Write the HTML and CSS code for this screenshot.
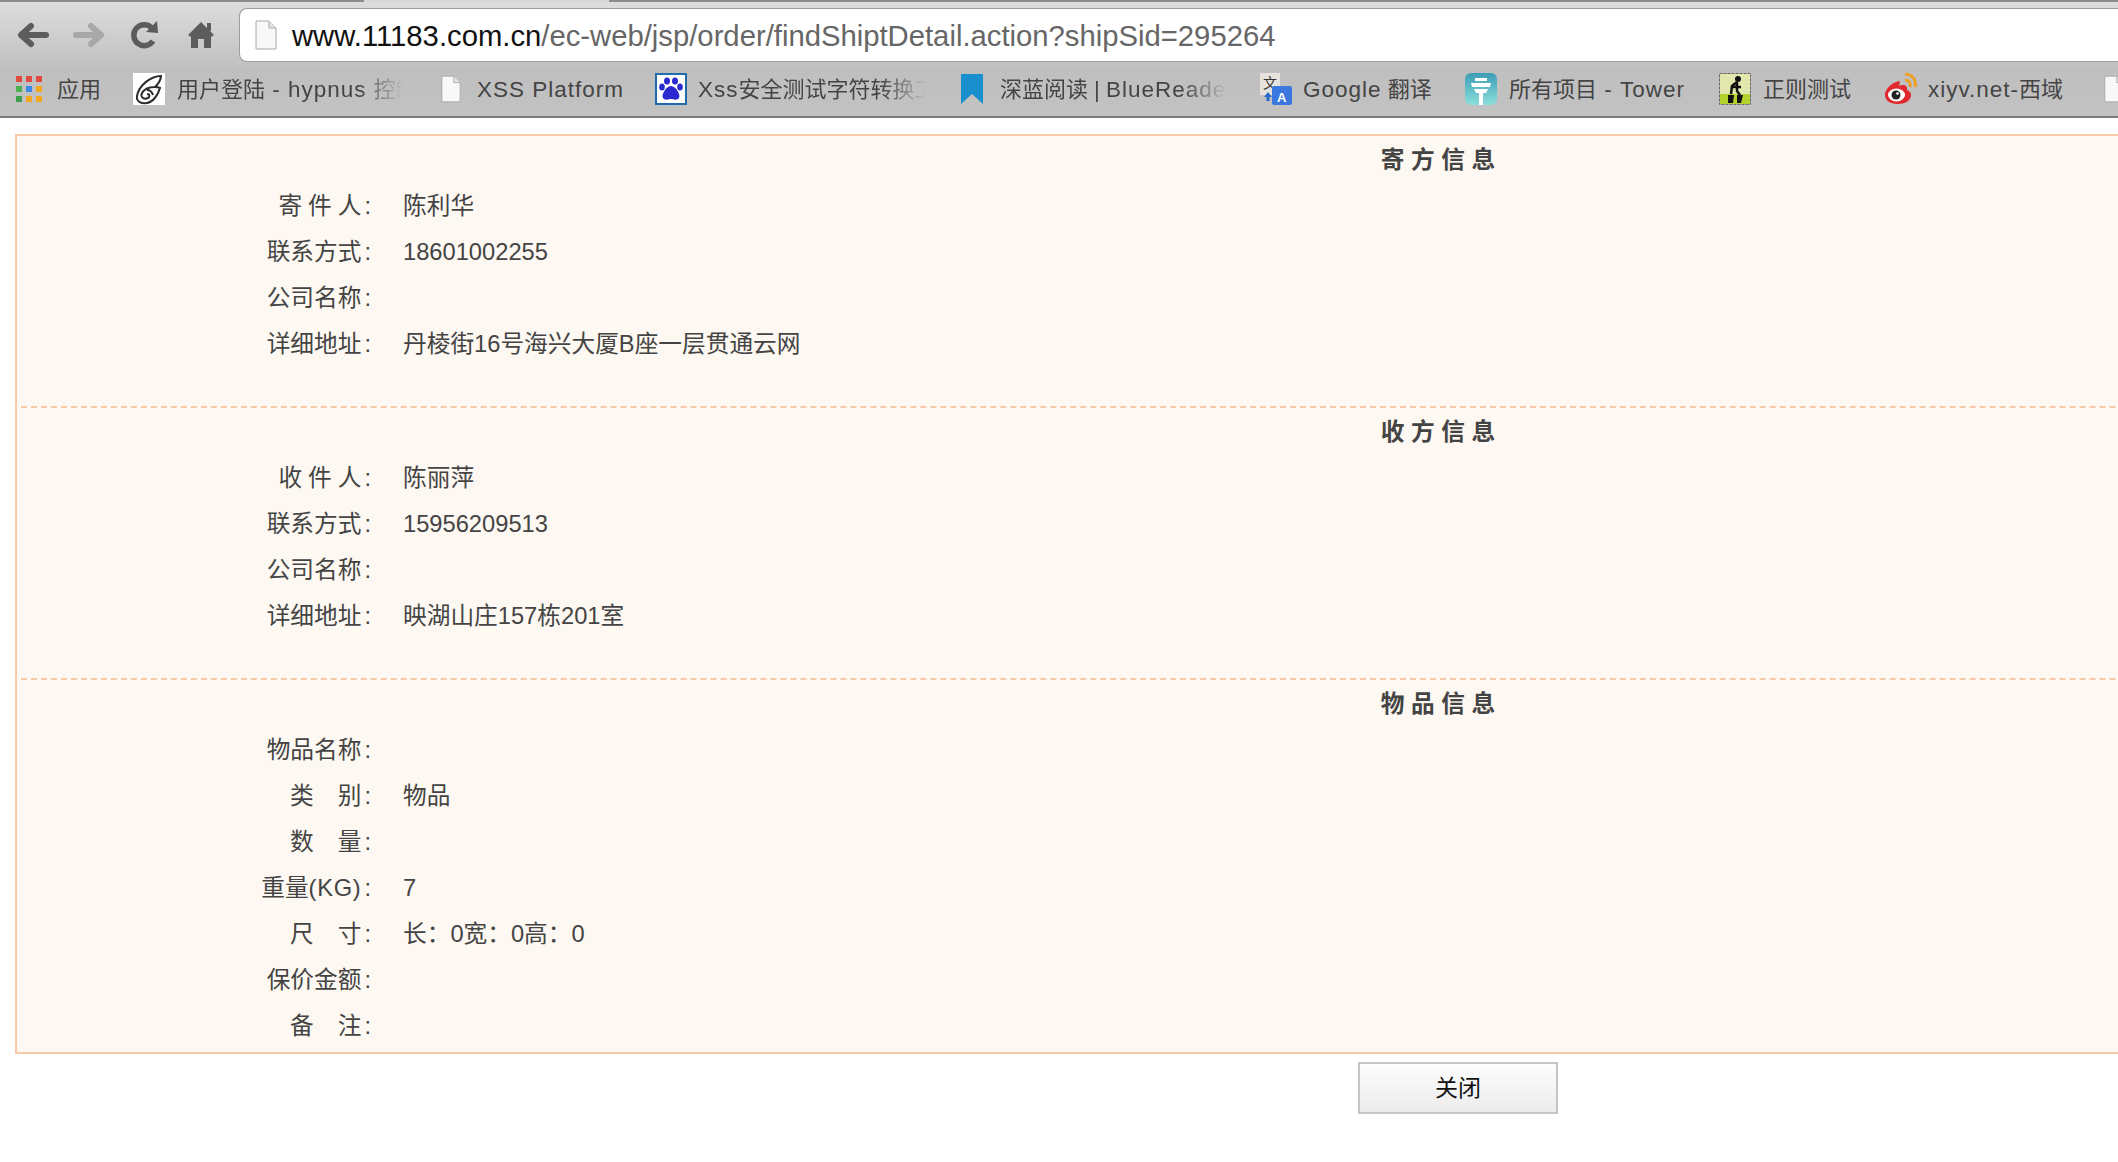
FILE: index.html
```html
<!DOCTYPE html>
<html lang="zh-CN">
<head>
    <meta charset="UTF-8">
    <title>寄件详情</title>
    <link rel="stylesheet" href="styles.css">
</head>
<body>
    <div class="browser-top">
        <div class="tab-strip"><span class="tab-gap"></span></div>
        <div class="toolbar">
            <div class="nav-icons">
                <svg class="nav-icon" viewBox="0 0 32 32"><path d="M14 7 L4 16 L14 25 M6 16 H29" fill="none" stroke="#5c5c5c" stroke-width="6" stroke-linecap="round" stroke-linejoin="round"/></svg>
                <svg class="nav-icon" viewBox="0 0 32 32"><path d="M18 7 L28 16 L18 25 M26 16 H3" fill="none" stroke="#a8a8a8" stroke-width="6" stroke-linecap="round" stroke-linejoin="round"/></svg>
                <svg class="nav-icon" viewBox="0 0 32 32"><path d="M24 22 A10.500 10.500 0 1 1 23 9" fill="none" stroke="#5c5c5c" stroke-width="5.500"/><path d="M17 13 L29 14 L28 2 Z" fill="#5c5c5c"/></svg>
                <svg class="nav-icon" viewBox="0 0 32 32"><path d="M16 3 L29 16 L26 18 V29 H19 V20 H13 V29 H6 V18 L3 16 Z" fill="#5c5c5c"/><rect x="22" y="4" width="4" height="8" fill="#5c5c5c"/></svg>
            </div>
            <div class="address-bar">
                <svg class="doc-icon" viewBox="0 0 24 30"><path d="M2 1 H15 L22 8 V29 H2 Z" fill="#f8f8f8" stroke="#a8a8a8"/><path d="M15 1 V8 H22" fill="#e6e6e6" stroke="#a8a8a8"/></svg>
                <span class="url"><b class="url-host">www.11183.com.cn</b>/ec-web/jsp/order/findShiptDetail.action?shipSid=295264</span>
            </div>
        </div>
        <div class="bookmarks">
            <div class="bookmark bm-apps">
                <svg class="apps-icon" viewBox="0 0 26 26">
                    <rect x="0" y="0" width="6" height="6" fill="#e04a3f"/><rect x="10" y="0" width="6" height="6" fill="#e04a3f"/><rect x="20" y="0" width="6" height="6" fill="#e04a3f"/>
                    <rect x="0" y="10" width="6" height="6" fill="#4caf50"/><rect x="10" y="10" width="6" height="6" fill="#3b88e8"/><rect x="20" y="10" width="6" height="6" fill="#f2a81d"/>
                    <rect x="0" y="20" width="6" height="6" fill="#3f9e4d"/><rect x="10" y="20" width="6" height="6" fill="#f2a81d"/><rect x="20" y="20" width="6" height="6" fill="#f2a81d"/>
                </svg>
                <span class="bm-text">应用</span>
            </div>
            <div class="bookmark bm-hypnus">
                <svg class="fav" viewBox="0 0 32 32"><rect width="32" height="32" fill="#fff"/><path d="M28 3 C18 3 6 12 4 23 C3 29 9 31 14 30 C20 29 25 22 27 15 C25 14 23 14 22 14 C26 10 28 6 28 3 Z M22 14 C17 14 12 15 9 20 C7 24 11 27 15 25 C17 24 17 21 14 21 M20 22 C19 19 17 17 14 17" fill="none" stroke="#2b2b2b" stroke-width="2"/></svg>
                <span class="bm-text fade">用户登陆<span class="lat"> - hypnus </span>控制台</span>
            </div>
            <div class="bookmark bm-xss">
                <svg class="fav-doc" viewBox="0 0 24 30"><path d="M2 1 H15 L22 8 V29 H2 Z" fill="#f8f8f8" stroke="#a8a8a8"/><path d="M15 1 V8 H22" fill="#e6e6e6" stroke="#a8a8a8"/></svg>
                <span class="bm-text lat">XSS Platform</span>
            </div>
            <div class="bookmark bm-paw">
                <svg class="fav" viewBox="0 0 32 32"><rect x="1" y="1" width="30" height="30" fill="#fff" stroke="#1f6aa8" stroke-width="2"/><ellipse cx="12" cy="8" rx="3" ry="3.500" fill="#2a2ad0"/><ellipse cx="20" cy="8" rx="3" ry="3.500" fill="#2a2ad0"/><ellipse cx="7" cy="14" rx="2.800" ry="3.500" fill="#2a2ad0"/><ellipse cx="25" cy="14" rx="2.800" ry="3.500" fill="#2a2ad0"/><path d="M16 13 C11 13 6 22 8 25 C10 28 14 26 16 26 C18 26 22 28 24 25 C26 22 21 13 16 13 Z" fill="#2a2ad0"/></svg>
                <span class="bm-text fade fade-paw"><span class="lat">Xss</span>安全测试字符转换工具</span>
            </div>
            <div class="bookmark bm-blue">
                <svg class="fav-mark" viewBox="0 0 22 30"><path d="M0 0 H22 V30 L11 20 L0 30 Z" fill="#1a8fce"/></svg>
                <span class="bm-text fade fade-blue">深蓝阅读 | <span class="lat">BlueReader</span></span>
            </div>
            <div class="bookmark bm-google">
                <svg class="fav" viewBox="0 0 32 32"><rect x="0" y="0" width="20" height="22" fill="#e5e3dc"/><text class="zh-glyph" x="3" y="15">文</text><rect x="12" y="13" width="20" height="19" rx="2" fill="#3a78e0"/><text class="latin-glyph" x="17" y="29">A</text><path d="M8 19 L12 24 H9.500 V28 H6.500 V24 H4 Z" fill="#2a69c8"/></svg>
                <span class="bm-text"><span class="lat">Google</span> 翻译</span>
            </div>
            <div class="bookmark bm-tower">
                <svg class="fav" viewBox="0 0 32 32"><defs><linearGradient id="towerBg" x1="0" y1="0" x2="0" y2="1"><stop offset="0" stop-color="#3d9db5"/><stop offset="1" stop-color="#8ce0dc"/></linearGradient></defs><rect width="32" height="32" rx="6" fill="url(#towerBg)"/><path d="M10 5 H22 V8 H10 Z M6 10 H26 L25 14 H7 Z M9 16 H23 L21 20 H11 Z M14 20 H18 V32 H14 Z" fill="#fff"/></svg>
                <span class="bm-text">所有项目<span class="lat"> - Tower</span></span>
            </div>
            <div class="bookmark bm-regex">
                <svg class="fav" viewBox="0 0 32 32"><rect x="0.500" y="0.500" width="31" height="31" fill="#e2e8ad" stroke="#666" stroke-dasharray="3 1"/><rect x="1" y="21" width="30" height="10" fill="#b4d22c"/><circle cx="19" cy="6" r="3" fill="#111"/><path d="M18 9 L13 13 L12 21 M18 9 L18 18 L21 22 M14 14 H22" fill="none" stroke="#111" stroke-width="2.500"/><path d="M9 22 H15 L14 30 H9 Z M18 22 H24 L22 30 H18 Z" fill="#111"/></svg>
                <span class="bm-text">正则测试</span>
            </div>
            <div class="bookmark bm-weibo">
                <svg class="fav-weibo" viewBox="0 0 34 32"><path d="M21 1 C28 1 33 7 31 14 M21 7 C25 7 27 10 26 14" fill="none" stroke="#f0a020" stroke-width="2.800"/><path d="M15 8 C7 10 0 17 1 23 C2 29 8 31 14 31 C22 31 27 27 27 22 C27 19 25 18 23 17 C24 12 19 11 15 13 C16 10 16 8 15 8 Z" fill="#e0282e"/><ellipse cx="12.500" cy="22" rx="8.500" ry="6.500" fill="#fff"/><circle cx="12" cy="22" r="4.500" fill="#222"/><circle cx="13.500" cy="20.500" r="1.300" fill="#fff"/></svg>
                <span class="bm-text"><span class="lat">xiyv.net-</span>西域</span>
            </div>
            <div class="bookmark bm-last">
                <svg class="fav-doc" viewBox="0 0 24 30"><path d="M2 1 H15 L22 8 V29 H2 Z" fill="#f8f8f8" stroke="#a8a8a8"/><path d="M15 1 V8 H22" fill="#e6e6e6" stroke="#a8a8a8"/></svg>
            </div>
        </div>
    </div>

    <div class="page">
        <div class="detail-box">
            <div class="section">
                <div class="section-title">寄 方 信 息</div>
                <div class="row"><span class="label">寄 件 人<i class="colon">:</i></span><span class="value">陈利华</span></div>
                <div class="row"><span class="label">联系方式<i class="colon">:</i></span><span class="value">18601002255</span></div>
                <div class="row"><span class="label">公司名称<i class="colon">:</i></span><span class="value"></span></div>
                <div class="row"><span class="label">详细地址<i class="colon">:</i></span><span class="value">丹棱街16号海兴大厦B座一层贯通云网</span></div>
            </div>
            <div class="section">
                <div class="section-title">收 方 信 息</div>
                <div class="row"><span class="label">收 件 人<i class="colon">:</i></span><span class="value">陈丽萍</span></div>
                <div class="row"><span class="label">联系方式<i class="colon">:</i></span><span class="value">15956209513</span></div>
                <div class="row"><span class="label">公司名称<i class="colon">:</i></span><span class="value"></span></div>
                <div class="row"><span class="label">详细地址<i class="colon">:</i></span><span class="value">映湖山庄157栋201室</span></div>
            </div>
            <div class="section section-last">
                <div class="section-title">物 品 信 息</div>
                <div class="row"><span class="label">物品名称<i class="colon">:</i></span><span class="value"></span></div>
                <div class="row"><span class="label">类&nbsp;&nbsp;&nbsp;&nbsp;别<i class="colon">:</i></span><span class="value">物品</span></div>
                <div class="row"><span class="label">数&nbsp;&nbsp;&nbsp;&nbsp;量<i class="colon">:</i></span><span class="value"></span></div>
                <div class="row"><span class="label">重量<span class="kg">(KG)</span><i class="colon">:</i></span><span class="value">7</span></div>
                <div class="row"><span class="label">尺&nbsp;&nbsp;&nbsp;&nbsp;寸<i class="colon">:</i></span><span class="value">长：0宽：0高：0</span></div>
                <div class="row"><span class="label">保价金额<i class="colon">:</i></span><span class="value"></span></div>
                <div class="row"><span class="label">备&nbsp;&nbsp;&nbsp;&nbsp;注<i class="colon">:</i></span><span class="value"></span></div>
            </div>
        </div>
        <div class="actions">
            <button class="close-btn">关闭</button>
        </div>
    </div>
</body>
</html>
```

FILE: styles.css
```css
* {
    box-sizing: border-box;
    margin: 0;
    padding: 0;
}

html, body {
    overflow: hidden;
    height: 100%;
}

body {
    font-family: "Liberation Sans", "Noto Sans CJK SC", sans-serif;
    background: #fff;
    color: #444;
}

.browser-top {
    height: 118px;
    background: linear-gradient(#dedede, #bfbfbf 60%, #c2c2c2);
    border-bottom: 2px solid #7b7b7b;
}

.tab-strip {
    height: 8px;
    border-top: 2px solid #8c8c8c;
    display: flex;
}

.tab-gap {
    margin: -2px 0 0 364px;
    width: 245px;
    height: 2px;
    background: #d8d8d8;
}

.toolbar {
    height: 54px;
    display: flex;
    align-items: center;
}

.nav-icons {
    width: 239px;
    display: flex;
    gap: 24px;
    padding-left: 17px;
}

.nav-icon {
    width: 32px;
    height: 32px;
}

.address-bar {
    flex: 1;
    height: 54px;
    background: #fff;
    border: 1px solid #9d9d9d;
    border-right: none;
    border-radius: 8px 0 0 8px;
    display: flex;
    align-items: center;
    padding-left: 14px;
}

.doc-icon {
    width: 24px;
    height: 30px;
    margin-right: 14px;
}

.url {
    font-size: 29.25px;
    line-height: 36px;
    padding-top: 2px;
    color: #666;
    white-space: nowrap;
}

.url-host {
    font-weight: normal;
    color: #111;
}

.bookmarks {
    height: 54px;
    display: flex;
    align-items: center;
    font-size: 22px;
    color: #444;
    white-space: nowrap;
}

.bookmark {
    display: flex;
    align-items: center;
    flex: none;
}

.bookmark svg {
    flex: none;
}

.bm-text {
    line-height: 30px;
    padding-top: 2px;
}

.lat {
    letter-spacing: 1px;
    font-size: 22.500px;
}

.bm-apps { width: 133px; padding-left: 16px; }
.bm-hypnus { width: 307px; }
.bm-xss { width: 215px; }
.bm-paw { width: 306px; }
.bm-blue { width: 299px; }
.bm-google { width: 205px; }
.bm-tower { width: 254px; }
.bm-regex { width: 165px; }
.bm-weibo { width: 219px; }

.apps-icon {
    width: 26px;
    height: 26px;
    margin-right: 15px;
}

.fav {
    width: 32px;
    height: 32px;
    margin-right: 12px;
}

.bm-paw .fav,
.bm-google .fav {
    margin-right: 11px;
}

.fav-doc {
    width: 22px;
    height: 30px;
    margin-right: 15px;
}

.fav-mark {
    width: 22px;
    height: 30px;
    margin-right: 17px;
}

.fav-weibo {
    width: 34px;
    height: 32px;
    margin-right: 10px;
}

.zh-glyph {
    font-size: 14px;
    fill: #333;
}

.latin-glyph {
    font-size: 13px;
    font-weight: bold;
    fill: #fff;
}

.fade {
    display: block;
    width: 226px;
    overflow: hidden;
    -webkit-mask-image: linear-gradient(to right, #000 80%, transparent);
    mask-image: linear-gradient(to right, #000 80%, transparent);
}

.fade-paw { width: 228px; }
.fade-blue { width: 227px; }

.page {
    width: 2861px;
    padding: 16px 0 0 15px;
}

.detail-box {
    background: #fdf8f1;
    border: 2px solid #f6c9a9;
    padding: 0 4px;
}

.section {
    height: 272px;
    border-bottom: 2px dashed #f6c9a9;
}

.section-last {
    height: auto;
    border-bottom: none;
    padding-bottom: 4px;
}

.section-title {
    height: 46px;
    line-height: 48px;
    text-align: center;
    font-size: 23.7px;
    font-weight: bold;
    color: #444;
}

.row {
    height: 46px;
    padding-top: 2px;
    display: flex;
    align-items: center;
    font-size: 23.7px;
    line-height: 30px;
    color: #444;
}

.label {
    width: 350px;
    text-align: right;
    white-space: nowrap;
    word-spacing: -0.6px;
}

.kg {
    letter-spacing: 0.7px;
}

.colon {
    font-style: normal;
    margin-left: 3px;
}

.value {
    margin-left: 32px;
}

.actions {
    padding: 8px 0 0 1343px;
}

.close-btn {
    display: block;
    width: 200px;
    height: 52px;
    border: 2px solid #c6c6c6;
    background: linear-gradient(#fdfdfd, #ececec);
    font-family: "Liberation Sans", "Noto Sans CJK SC", sans-serif;
    font-size: 23px;
    line-height: 30px;
    color: #111;
}
```
